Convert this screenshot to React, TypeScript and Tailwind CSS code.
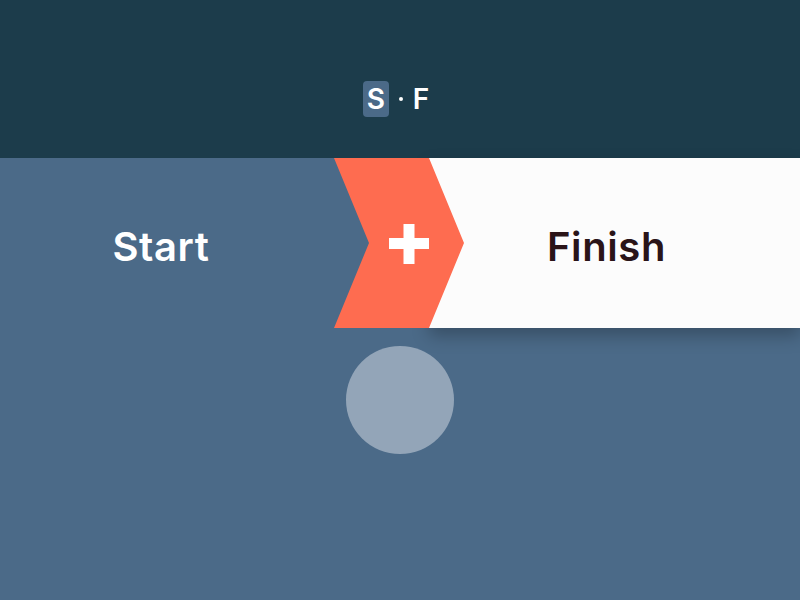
export default function App() {
  return (
    <div className="h-[600px] w-[800px] overflow-hidden bg-[#4b6a88] font-['Inter',sans-serif]">
      <header className="flex h-[158px] items-center justify-center bg-[#1c3c4b] pr-[8px] pt-[40px] text-[28px] font-semibold text-white">
        <span className="flex h-[36px] w-[26px] items-center justify-center rounded-[4px] bg-[#4b6a88]">S</span>
        <span className="mx-[10px] h-[4px] w-[4px] rounded-full bg-white" />
        <span>F</span>
      </header>

      <div className="flex h-[170px]">
        <div className="flex w-[334px] items-center justify-center pr-[12px] pt-[8px] text-[40px] font-semibold tracking-[0.6px] text-white">
          Start
        </div>
        <div className="relative z-10 -mr-[35px] w-[130px] shrink-0">
          <svg viewBox="0 0 130 170" className="h-full w-full">
            <polygon points="0,0 95,0 130,85 95,170 0,170 35,85" fill="#fe6c50" />
            <rect x="55" y="80" width="40" height="11" fill="#fff" />
            <rect x="69.5" y="66" width="11" height="40" fill="#fff" />
          </svg>
        </div>
        <div className="flex flex-1 items-center justify-center bg-[#fcfcfc] pr-[16px] pt-[8px] text-[40px] font-semibold tracking-[0.6px] text-[#2a1418] shadow-[0_8px_16px_rgba(0,0,0,0.25)]">
          Finish
        </div>
      </div>

      <div className="mx-auto mt-[18px] h-[108px] w-[108px] rounded-full bg-[#93a5b8]" />
    </div>
  );
}
